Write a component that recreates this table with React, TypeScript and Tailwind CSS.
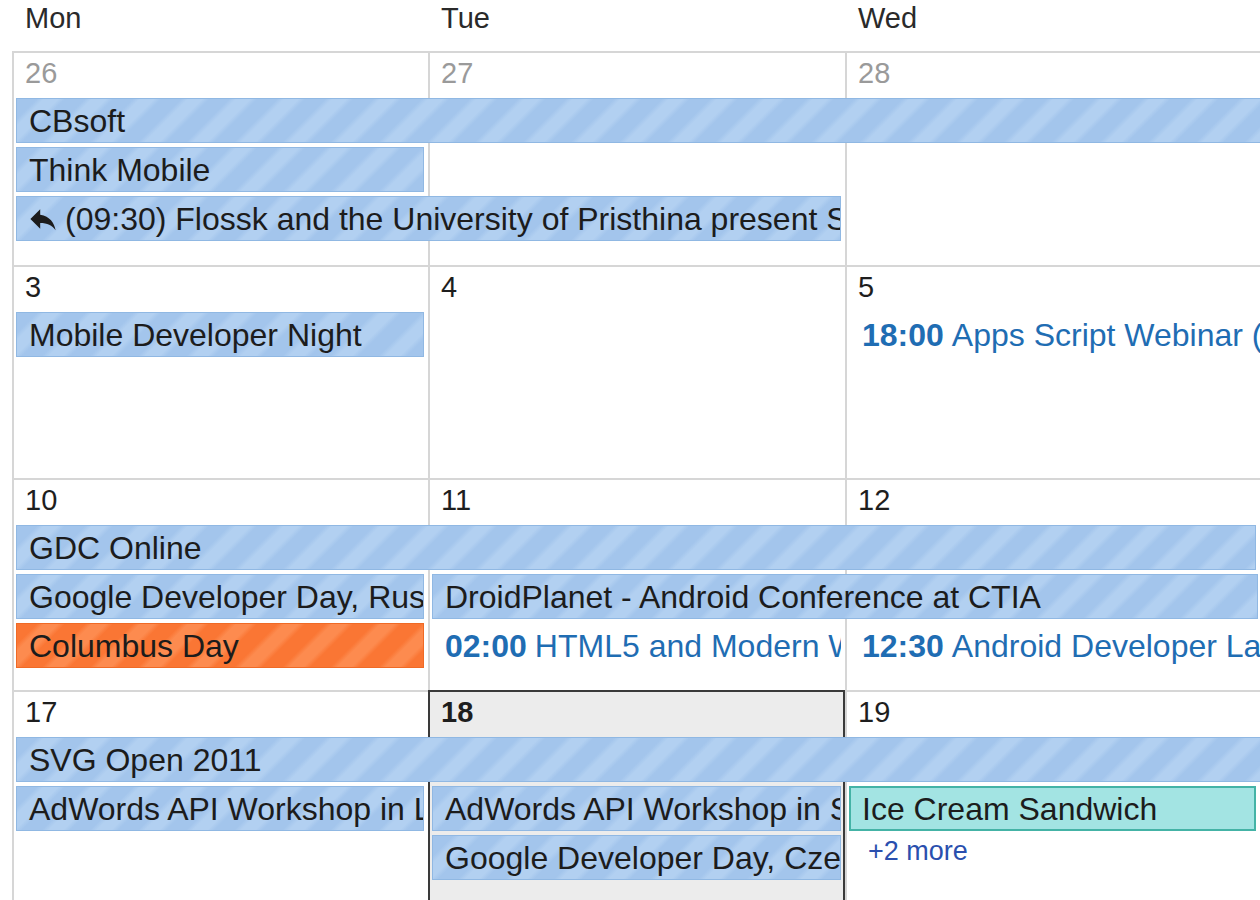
import React from "react";

const COL_START = ["", "col-start-1", "col-start-2", "col-start-3", "col-start-4"];
const COL_SPAN = ["", "col-span-1", "col-span-2", "col-span-3", "col-span-4"];
const ROW_START = ["", "row-start-1", "row-start-2", "row-start-3", "row-start-4", "row-start-5"];

type Day = { num: string; muted?: boolean; today?: boolean };
type Ev = {
  col: number;
  span?: number;
  row: number;
  kind: "blue" | "orange" | "teal" | "timed" | "more";
  text: string;
  time?: string;
  icon?: boolean;
  mr?: string;
};

const BAR_BASE =
  "flex items-center h-[45px] mt-[1px] ml-[4px] min-w-0 overflow-hidden whitespace-nowrap text-[32px] leading-[46px] text-[#1c1c1c]";

function ReplyIcon() {
  return (
    <svg width="28" height="26" viewBox="2 3 20 18" className="shrink-0 mr-[8px]" aria-hidden>
      <path d="M10 9V5l-7 7 7 7v-4.1c5 0 8.5 1.6 11 5.1-1-5-4-10-11-11z" fill="#1c1c1c" />
    </svg>
  );
}

function Event({ e }: { e: Ev }) {
  const place = `${COL_START[e.col]} ${COL_SPAN[e.span ?? 1]} ${ROW_START[e.row]}`;
  const mr = e.mr ?? "mr-[4px]";
  if (e.kind === "timed") {
    return (
      <div className={`${place} ${BAR_BASE} ${mr} pl-[13px] text-[#1f6db3]`}>
        <span className="font-bold">{e.time}</span>
        <span className="ml-[8px]">{e.text}</span>
      </div>
    );
  }
  if (e.kind === "more") {
    return (
      <div className={`${place} ml-[4px] mt-[2px] pl-[19px] text-[27px] leading-[30px] text-[#2a4fae] whitespace-nowrap`}>
        {e.text}
      </div>
    );
  }
  let skin = "";
  if (e.kind === "blue")
    skin =
      "pl-[12px] border border-[#90b8e3] bg-[repeating-linear-gradient(135deg,#a3c5ec_0px,#a3c5ec_14px,#b2d0f1_19px,#b2d0f1_29px,#a3c5ec_34px)]";
  if (e.kind === "orange")
    skin =
      "pl-[12px] border border-[#ef6a26] bg-[repeating-linear-gradient(135deg,#fa7634_0px,#fa7634_14px,#fd8b4f_19px,#fd8b4f_29px,#fa7634_34px)]";
  if (e.kind === "teal") skin = "pl-[11px] border-2 border-[#44b3a6] bg-[#a3e4e3]";
  return (
    <div className={`${place} ${BAR_BASE} ${mr} ${skin}`}>
      {e.icon && <ReplyIcon />}
      <span>{e.text}</span>
    </div>
  );
}

function Week({ h, days, events }: { h: string; days: Day[]; events: Ev[] }) {
  return (
    <div
      className={`grid grid-cols-[416px_417px_416px_417px] grid-rows-[46px_49px_49px_49px_1fr] ${h}`}
    >
      {days.map((d, i) => (
        <div
          key={i}
          className={`${COL_START[i + 1]} row-span-full ${
            d.today
              ? "border-2 border-[#3a3a3a] bg-[#ececec] pl-[11px] pt-[3px]"
              : "border-l-2 border-t-2 border-[#d6d6d6] pl-[11px] pt-[3px]"
          }`}
        >
          <div
            className={`text-[29px] leading-[34px] ${
              d.muted ? "text-[#9a9a9a]" : "text-[#1e1e1e]"
            } ${d.today ? "font-bold" : ""}`}
          >
            {d.num}
          </div>
        </div>
      ))}
      {events.map((e, i) => (
        <Event key={i} e={e} />
      ))}
    </div>
  );
}

export default function App() {
  const heads = ["Mon", "Tue", "Wed", "Thu"];
  return (
    <div className="w-[1260px] h-[900px] overflow-hidden bg-white font-['Liberation_Sans',Arial,sans-serif]">
      <div className="pl-[12px] w-[1700px]">
        <div className="grid grid-cols-[416px_417px_416px_417px] h-[51px]">
          {heads.map((hd) => (
            <div key={hd} className="pl-[13px] text-[29px] leading-[36px] text-[#2a2a2a]">
              {hd}
            </div>
          ))}
        </div>
        <Week
          h="h-[214px]"
          days={[
            { num: "26", muted: true },
            { num: "27", muted: true },
            { num: "28", muted: true },
            { num: "29", muted: true },
          ]}
          events={[
            { col: 1, span: 4, row: 2, kind: "blue", text: "CBsoft" },
            { col: 1, row: 3, kind: "blue", text: "Think Mobile" },
            {
              col: 1,
              span: 2,
              row: 4,
              kind: "blue",
              icon: true,
              text: "(09:30) Flossk and the University of Pristhina present Software Freedom Kosova",
            },
          ]}
        />
        <Week
          h="h-[213px]"
          days={[{ num: "3" }, { num: "4" }, { num: "5" }, { num: "6" }]}
          events={[
            { col: 1, row: 2, kind: "blue", text: "Mobile Developer Night" },
            { col: 3, row: 2, kind: "timed", time: "18:00", text: "Apps Script Webinar (@Google Apps Script)", mr: "mr-0" },
          ]}
        />
        <Week
          h="h-[212px]"
          days={[{ num: "10" }, { num: "11" }, { num: "12" }, { num: "13" }]}
          events={[
            { col: 1, span: 3, row: 2, kind: "blue", text: "GDC Online", mr: "mr-[5px]" },
            { col: 1, row: 3, kind: "blue", text: "Google Developer Day, Russia" },
            { col: 2, span: 2, row: 3, kind: "blue", text: "DroidPlanet - Android Conference at CTIA", mr: "mr-[3px]" },
            { col: 1, row: 4, kind: "orange", text: "Columbus Day" },
            { col: 2, row: 4, kind: "timed", time: "02:00", text: "HTML5 and Modern Web Development" },
            { col: 3, row: 4, kind: "timed", time: "12:30", text: "Android Developer Lab", mr: "mr-0" },
          ]}
        />
        <Week
          h="h-[240px]"
          days={[{ num: "17" }, { num: "18", today: true }, { num: "19" }, { num: "20" }]}
          events={[
            { col: 1, span: 4, row: 2, kind: "blue", text: "SVG Open 2011" },
            { col: 1, row: 3, kind: "blue", text: "AdWords API Workshop in London" },
            { col: 2, row: 3, kind: "blue", text: "AdWords API Workshop in Sydney" },
            { col: 3, row: 3, kind: "teal", text: "Ice Cream Sandwich", mr: "mr-[5px]" },
            { col: 2, row: 4, kind: "blue", text: "Google Developer Day, Czech Republic" },
            { col: 3, row: 4, kind: "more", text: "+2 more" },
          ]}
        />
      </div>
    </div>
  );
}
